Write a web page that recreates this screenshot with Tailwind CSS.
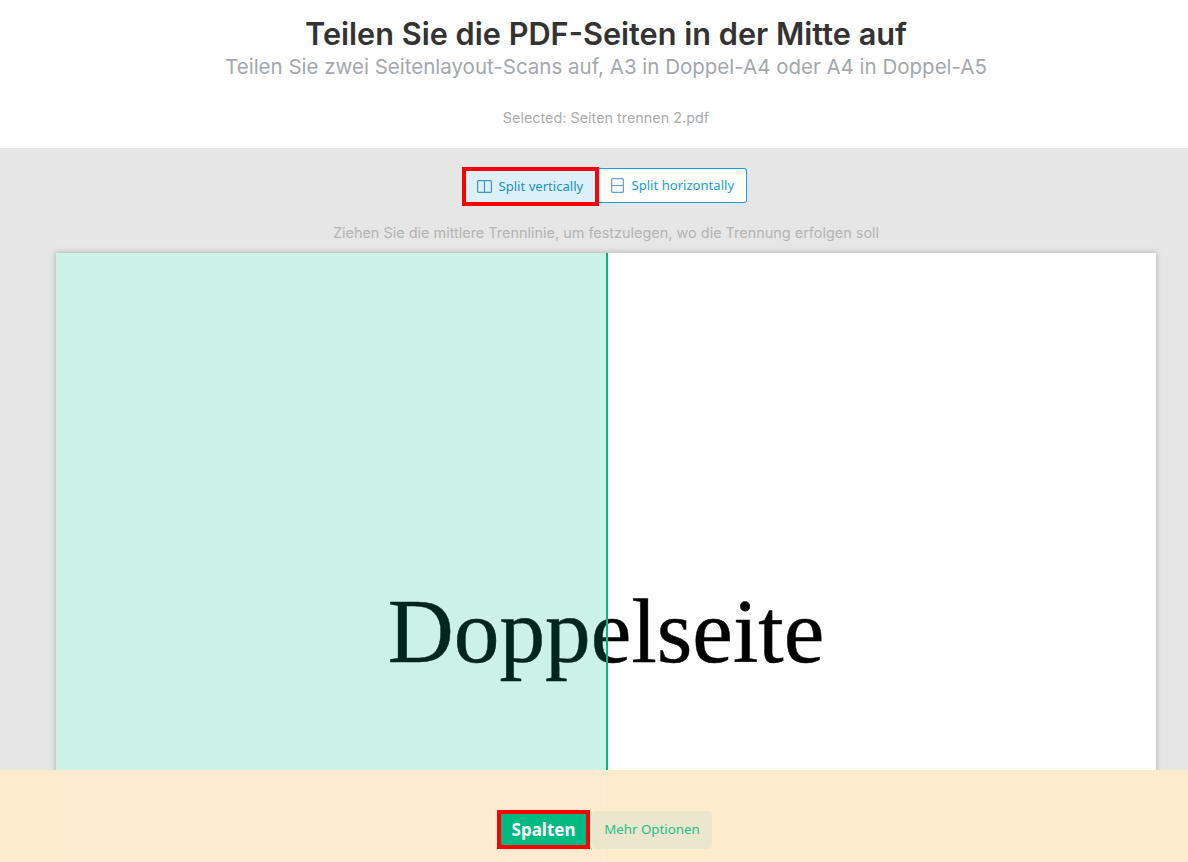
<!DOCTYPE html>
<html lang="de">
<head>
  <meta charset="UTF-8" />
  <meta name="viewport" content="width=device-width, initial-scale=1.0">
  <title>PDF-Seiten teilen</title>
  <script src="https://cdn.jsdelivr.net/npm/@tailwindcss/browser@4"></script>
</head>
<body class="h-[862px] overflow-hidden bg-[#e6e6e6] font-['Inter',sans-serif]">
  <div class="relative h-[862px] w-[1212px] overflow-hidden">

    <!-- Header -->
    <header class="h-[148px] bg-white pt-[16px] text-center">
      <h1 class="text-[30.7px] leading-[36px] font-semibold text-[#333333]">Teilen Sie die PDF-Seiten in der Mitte auf</h1>
      <p class="text-[20.5px] leading-[30px] text-[#a3a8ae]">Teilen Sie zwei Seitenlayout-Scans auf, A3 in Doppel-A4 oder A4 in Doppel-A5</p>
      <p class="mt-[26px] text-[14.4px] leading-[20px] text-[#ababab]">Selected: Seiten trennen 2.pdf</p>
    </header>

    <!-- Split mode -->
    <div class="mt-[19px] flex justify-center pr-[4px] font-['Noto_Sans',sans-serif] text-[13.1px]">
      <button class="flex h-[39px] w-[137px] items-center gap-[7px] border-4 border-[#ff0000] bg-[#dcf0fa] pl-[11px] text-[#1a8fc4]">
        <svg width="15" height="13" viewBox="0 0 15 13" fill="none" stroke="#3d94c8" stroke-width="1.2"><rect x="0.6" y="0.6" width="13.8" height="11.8" rx="1"/><path d="M7.5 1v11"/></svg>
        Split vertically
      </button>
      <button class="mt-px flex h-[35px] w-[148px] items-center gap-[8px] self-start rounded-r-[3px] border border-l-0 border-[#1a9bdb] bg-white pl-[12px] text-[#1a9bdb]">
        <svg width="13" height="15" viewBox="0 0 13 15" fill="none" stroke="#6a9fd8" stroke-width="1.2"><rect x="0.6" y="0.6" width="11.8" height="13.8" rx="1"/><path d="M1 7.5h11"/></svg>
        Split horizontally
      </button>
    </div>

    <p class="mt-[17px] text-center text-[14.45px] leading-[20px] text-[#b4b4b4]">Ziehen Sie die mittlere Trennlinie, um festzulegen, wo die Trennung erfolgen soll</p>

    <!-- Page preview -->
    <div class="relative mx-auto mt-[10px] flex h-[609px] w-[1100px] justify-center bg-white shadow-[0_0_6px_rgba(0,0,0,0.25)]">
      <span class="mt-[319px] h-fit font-['Liberation_Serif',serif] text-[91.4px] leading-[120px] text-black [-webkit-text-stroke:0.5px_black]">Doppelseite</span>
      <div class="absolute inset-y-0 left-0 w-[552px] border-r-2 border-[#00ba82] bg-[#00ba82]/20"></div>
    </div>

    <!-- Footer actions -->
    <footer class="absolute inset-x-0 top-[770px] flex h-[92px] items-start justify-center gap-[2px] bg-[#fdebcd]/98 pt-[40px] pr-[3px]">
      <button class="h-[39px] w-[93px] border-4 border-[#ff0000] bg-[#00ba82] font-['Noto_Sans',sans-serif] text-[17px] font-bold text-white">Spalten</button>
      <button class="mt-px h-[38px] w-[120px] rounded-[5px] bg-[#ebe7cc] font-['Noto_Sans',sans-serif] text-[13.3px] text-[#1cbf8c]">Mehr Optionen</button>
    </footer>
  </div>
</body>
</html>
